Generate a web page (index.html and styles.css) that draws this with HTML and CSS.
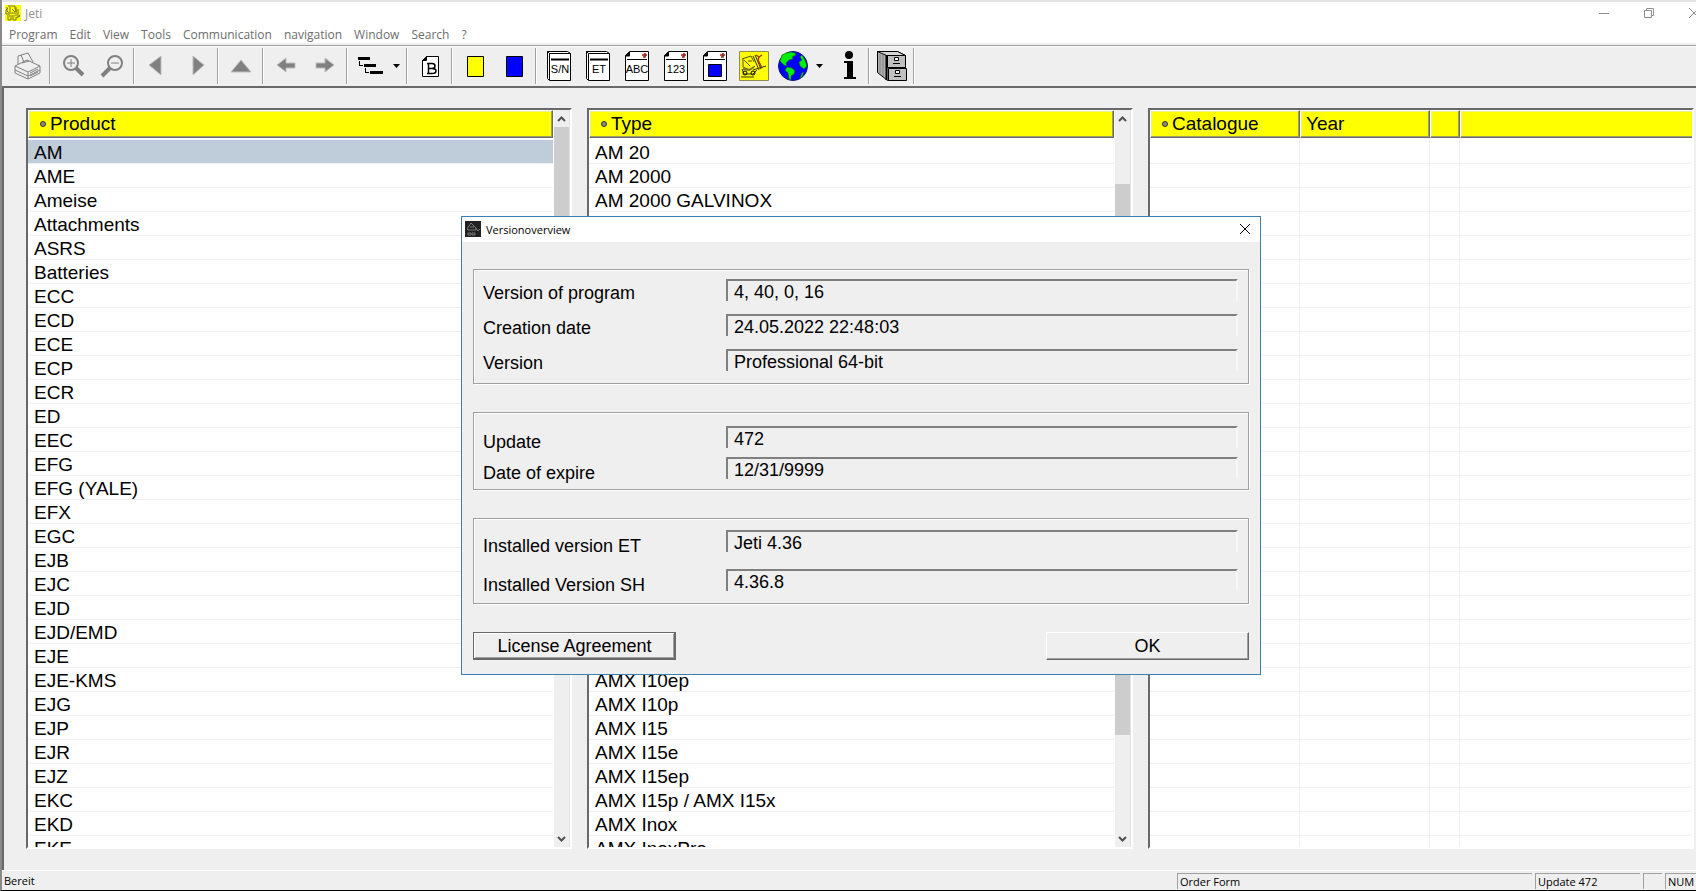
FILE: index.html
```
<!DOCTYPE html>
<html lang="en">
  <head>
    <meta charset="utf-8">
    <title>Jeti</title>
    <link rel="stylesheet" href="styles.css">
  </head>
  <body>
    <header class="titlebar">
      <svg class="app-icon" viewBox="0 0 16 16">
        <rect width="16" height="16" fill="#ff0"/>
        <path d="M3 1h7v3h1v3M2 2v4l2 2h6M3 3L1 5v4h4M5 2v5M7 4l3 3M11 2v9M13 4v8l2-2M2 11h8M3 12v3h3v-3M8 12v3h3v-3M11 13l4-2" fill="none" stroke="#77772e"/>
      </svg>
      <span class="title">Jeti</span>
      <div class="window-buttons">
        <button aria-label="Minimize"><svg viewBox="0 0 12 12"><path d="M1 6.500h10" /></svg></button>
        <button aria-label="Restore"><svg viewBox="0 0 12 12"><path d="M1.500 3.500h7v7h-7zM3.500 3V1.500h7v7H9" /></svg></button>
        <button aria-label="Close"><svg viewBox="0 0 12 12"><path d="M1 1l10 10M11 1L1 11" /></svg></button>
      </div>
    </header>

    <nav class="menu">
      <button>Program</button>
      <button>Edit</button>
      <button>View</button>
      <button>Tools</button>
      <button>Communication</button>
      <button>navigation</button>
      <button>Window</button>
      <button>Search</button>
      <button>?</button>
    </nav>

    <div class="toolbar">
      <button class="tool" aria-label="Print">
        <svg viewBox="0 0 30 30" fill="none" stroke="#808080">
          <path d="M2 15l12-6 13 6v7l-12 6-13-6zM2 15l13 6 12-6M15 21v7M5 13V5l10-3 5 9M8 4l3 7M2 19l13 6 12-6M17 22l8-4M17 25l8-4M9 12l7-2"/>
        </svg>
      </button>
      <span class="sep"></span>
      <button class="tool" aria-label="Zoom in">
        <svg viewBox="0 0 30 30" fill="none" stroke="#808080">
          <circle cx="13" cy="12" r="7" stroke-width="2"/>
          <path d="M9 12h8M13 8v8"/>
          <path d="M18 17l7 7" stroke-width="4"/>
        </svg>
      </button>
      <button class="tool" aria-label="Zoom out">
        <svg viewBox="0 0 30 30" fill="none" stroke="#808080">
          <circle cx="18" cy="12" r="7" stroke-width="2"/>
          <path d="M14 12h8"/>
          <path d="M13 17l-8 8" stroke-width="4"/>
        </svg>
      </button>
      <span class="sep"></span>
      <button class="tool" aria-label="Previous">
        <svg viewBox="0 0 30 30"><path d="M19 5v19L7 14z" fill="#808080" stroke="#bdbdbd"/></svg>
      </button>
      <button class="tool" aria-label="Next">
        <svg viewBox="0 0 30 30"><path d="M12 5v19l11-10z" fill="#808080" stroke="#bdbdbd"/></svg>
      </button>
      <span class="sep"></span>
      <button class="tool" aria-label="Up">
        <svg viewBox="0 0 30 30"><path d="M15 9l10 12H5z" fill="#808080" stroke="#bdbdbd"/></svg>
      </button>
      <span class="sep"></span>
      <button class="tool" aria-label="Back">
        <svg viewBox="0 0 30 30"><path d="M6 14l9-7v5h9v5h-9v4z" fill="#808080" stroke="#bdbdbd"/></svg>
      </button>
      <button class="tool" aria-label="Forward">
        <svg viewBox="0 0 30 30"><path d="M24 14l-9-7v5H6v5h9v4z" fill="#808080" stroke="#bdbdbd"/></svg>
      </button>
      <span class="sep"></span>
      <button class="tool" aria-label="Tree">
        <svg viewBox="0 0 30 30" shape-rendering="crispEdges">
          <path d="M3 6h12v3H3zM9 13h12v3H9zM15 20h13v3H15z"/>
          <path d="M4.500 10v4.500H8M10.500 17v4.500H14" fill="none" stroke="#000"/>
        </svg>
      </button>
      <button class="drop" aria-label="Tree menu"><svg viewBox="0 0 7 4"><path d="M0 0h7L3.500 4z"/></svg></button>
      <span class="sep"></span>
      <button class="tool" aria-label="Page B">
        <svg viewBox="0 0 30 30" fill="none" stroke="#000">
          <path d="M11.500 5.500h12v20h-16v-16z" fill="#fff"/>
          <path d="M7.500 9.500l4-4v4z" fill="#000"/>
          <path d="M13.500 12v10M12 12.500h5q3 0 3 2.500t-3 2.500h-3M17 17.500q4 0 4 2.500t-4 2.500h-5" stroke-width="1.500"/>
        </svg>
      </button>
      <span class="sep"></span>
      <button class="tool" aria-label="Yellow marker">
        <svg viewBox="0 0 30 30"><path d="M7.500 5.500h16v20h-16z" fill="#ff0" stroke="#000"/></svg>
      </button>
      <button class="tool" aria-label="Blue marker">
        <svg viewBox="0 0 30 30"><path d="M7.500 5.500h16v20h-16z" fill="#00f" stroke="#000"/></svg>
      </button>
      <span class="sep"></span>
      <button class="tool" aria-label="Serial number">
        <svg viewBox="0 0 30 30" fill="#fff" stroke="#000">
          <path d="M3.500.500h20l3 2v27h-21l-2-2zM5.500 29V2.500h21M3.500.500l2 2"/>
          <path d="M7 8.500h18" stroke-width="2"/>
          <text class="glyph" x="16" y="22">S/N</text>
        </svg>
      </button>
      <button class="tool" aria-label="ET">
        <svg viewBox="0 0 30 30" fill="#fff" stroke="#000">
          <path d="M3.500.500h20l3 2v27h-21l-2-2zM5.500 29V2.500h21M3.500.500l2 2"/>
          <path d="M7 8.500h18" stroke-width="2"/>
          <text class="glyph" x="16" y="22">ET</text>
        </svg>
      </button>
      <button class="tool" aria-label="Search by name">
        <svg viewBox="0 0 30 30" fill="#fff" stroke="#000">
          <path d="M7.500.500h19v29h-23v-25zM5 8.500h20"/>
          <path d="M3.500 5l4-4v4z" fill="#000"/>
          <path d="M21 6h2V2M20 4h5" stroke="#a01818" stroke-width="1.500"/>
          <text class="glyph" x="15" y="22">ABC</text>
        </svg>
      </button>
      <button class="tool" aria-label="Search by number">
        <svg viewBox="0 0 30 30" fill="#fff" stroke="#000">
          <path d="M7.500.500h19v29h-23v-25zM5 8.500h20"/>
          <path d="M3.500 5l4-4v4z" fill="#000"/>
          <path d="M21 6h2V2M20 4h5" stroke="#a01818" stroke-width="1.500"/>
          <text class="glyph" x="15" y="22">123</text>
        </svg>
      </button>
      <button class="tool" aria-label="Search by picture">
        <svg viewBox="0 0 30 30" fill="#fff" stroke="#000">
          <path d="M7.500.500h19v29h-23v-25zM5 8.500h20"/>
          <path d="M3.500 5l4-4v4z" fill="#000"/>
          <path d="M21 6h2V2M20 4h5" stroke="#a01818" stroke-width="1.500"/>
          <path d="M8.500 13.500h13v12h-13z" fill="#00f"/>
        </svg>
      </button>
      <button class="tool" aria-label="Truck parts">
        <svg viewBox="0 0 30 30" fill="none" stroke="#000">
          <path d="M.500.500h29v29H.500z" fill="#ff0" stroke="#8d8d50"/>
          <path d="M3 8l9-3 3 6M4 8v8l7 3 5-4M5 9l6 6M9 10h4" stroke="#55551a"/>
          <path d="M14 5l6 14M16 4l6 14M14 19l13-4M3 18l2 5h9l4-4M2 26h13" stroke="#33330a"/>
          <circle cx="6" cy="22" r="2"/><circle cx="14" cy="22" r="2"/>
          <path d="M17 4l3 2-1 3 4 8M20 6l3-2" stroke="#a83a1a" stroke-width="1.500"/>
          <path d="M4 18l6 1 5-3" stroke="#77772e" stroke-width="2"/>
        </svg>
      </button>
      <button class="tool" aria-label="Language">
        <svg viewBox="0 0 30 30">
          <circle cx="15" cy="15" r="14.500" fill="#00f" stroke="#117"/>
          <path d="M8 2l5-1 4 1 1 2-4 2 1 2-4 1-3 3 1 3-3-1-4-4 2-6zM9 16l5 1 3 3-1 3-3 2v4l-2-1-1-6-3-3zM24 4l3 5 2 6-3 3-4-3-1-4 3-2-2-3zM24 22l2-1-2 5-2 1z" fill="#0e0" stroke="#0a5a2a" stroke-width=".600"/>
        </svg>
      </button>
      <button class="drop" aria-label="Language menu"><svg viewBox="0 0 7 4"><path d="M0 0h7L3.500 4z"/></svg></button>
      <button class="tool" aria-label="Info">
        <svg viewBox="0 0 30 30"><circle cx="17" cy="4" r="4"/><path d="M12 10h9v16h3v2H12v-2h3V12h-3z"/></svg>
      </button>
      <span class="sep"></span>
      <button class="tool" aria-label="Order form">
        <svg viewBox="0 0 30 30" stroke="#000">
          <path d="M.500.500h20l8 4v25h-18l-10-8z" fill="#b0b0b0"/>
          <path d="M.500.500h20l8 4h-19z" fill="#d5d5d5"/>
          <path d="M3 3v19M6 4v21" stroke="#808080"/>
          <path d="M10.500 4.500h18v12h-18zM11.500 17.500h18v12h-18z" fill="#c0c0c0"/>
          <path d="M17.500 6.500h4v3h-4zM16 12.500h7M18.500 19.500h4v3h-4zM17 25.500h7" fill="#fff"/>
          <path d="M9.500 4v25" stroke-width="2"/>
        </svg>
      </button>
      <span class="sep"></span>
    </div>

    <main class="panels">
      <section class="panel">
        <div class="list">
          <table>
            <thead><tr><th><span class="sort"></span>Product</th></tr></thead>
            <tbody>
              <tr class="selected"><td>AM</td></tr>
              <tr><td>AME</td></tr>
              <tr><td>Ameise</td></tr>
              <tr><td>Attachments</td></tr>
              <tr><td>ASRS</td></tr>
              <tr><td>Batteries</td></tr>
              <tr><td>ECC</td></tr>
              <tr><td>ECD</td></tr>
              <tr><td>ECE</td></tr>
              <tr><td>ECP</td></tr>
              <tr><td>ECR</td></tr>
              <tr><td>ED</td></tr>
              <tr><td>EEC</td></tr>
              <tr><td>EFG</td></tr>
              <tr><td>EFG (YALE)</td></tr>
              <tr><td>EFX</td></tr>
              <tr><td>EGC</td></tr>
              <tr><td>EJB</td></tr>
              <tr><td>EJC</td></tr>
              <tr><td>EJD</td></tr>
              <tr><td>EJD/EMD</td></tr>
              <tr><td>EJE</td></tr>
              <tr><td>EJE-KMS</td></tr>
              <tr><td>EJG</td></tr>
              <tr><td>EJP</td></tr>
              <tr><td>EJR</td></tr>
              <tr><td>EJZ</td></tr>
              <tr><td>EKC</td></tr>
              <tr><td>EKD</td></tr>
              <tr><td>EKE</td></tr>
            </tbody>
          </table>
        </div>
        <div class="scrollbar">
          <button aria-label="Scroll up"><svg viewBox="0 0 9 6"><path d="M1 5l3.500-3.500L8 5"/></svg></button>
          <div class="track"><div class="thumb thumb-product"></div></div>
          <button aria-label="Scroll down"><svg viewBox="0 0 9 6"><path d="M1 1l3.500 3.500L8 1"/></svg></button>
        </div>
      </section>

      <section class="panel">
        <div class="list">
          <table>
            <thead><tr><th><span class="sort"></span>Type</th></tr></thead>
            <tbody>
              <tr><td>AM 20</td></tr>
              <tr><td>AM 2000</td></tr>
              <tr><td>AM 2000 GALVINOX</td></tr>
              <tr><td></td></tr>
              <tr><td></td></tr>
              <tr><td></td></tr>
              <tr><td></td></tr>
              <tr><td></td></tr>
              <tr><td></td></tr>
              <tr><td></td></tr>
              <tr><td></td></tr>
              <tr><td></td></tr>
              <tr><td></td></tr>
              <tr><td></td></tr>
              <tr><td></td></tr>
              <tr><td></td></tr>
              <tr><td></td></tr>
              <tr><td></td></tr>
              <tr><td></td></tr>
              <tr><td></td></tr>
              <tr><td></td></tr>
              <tr><td></td></tr>
              <tr><td>AMX I10ep</td></tr>
              <tr><td>AMX I10p</td></tr>
              <tr><td>AMX I15</td></tr>
              <tr><td>AMX I15e</td></tr>
              <tr><td>AMX I15ep</td></tr>
              <tr><td>AMX I15p / AMX I15x</td></tr>
              <tr><td>AMX Inox</td></tr>
              <tr><td>AMX InoxPro</td></tr>
            </tbody>
          </table>
        </div>
        <div class="scrollbar">
          <button aria-label="Scroll up"><svg viewBox="0 0 9 6"><path d="M1 5l3.500-3.500L8 5"/></svg></button>
          <div class="track"><div class="thumb thumb-type"></div></div>
          <button aria-label="Scroll down"><svg viewBox="0 0 9 6"><path d="M1 1l3.500 3.500L8 1"/></svg></button>
        </div>
      </section>

      <section class="panel">
        <div class="list">
          <table class="catalogue">
            <thead>
              <tr>
                <th class="col-catalogue"><span class="sort"></span>Catalogue</th>
                <th class="col-year">Year</th>
                <th class="col-flag"></th>
                <th class="col-rest"></th>
              </tr>
            </thead>
            <tbody>
              <tr><td></td><td></td><td></td><td></td></tr>
            </tbody>
          </table>
        </div>
      </section>
    </main>

    <footer class="statusbar">
      <span class="message">Bereit</span>
      <span class="pane pane-order">Order Form</span>
      <span class="pane pane-update">Update 472</span>
      <span class="pane pane-caps"></span>
      <span class="pane pane-num">NUM</span>
    </footer>

    <div class="dialog" role="dialog" aria-labelledby="dialog_title">
      <div class="dialog-title">
        <svg class="app-icon" viewBox="0 0 16 16">
          <rect width="16" height="16" fill="#222"/>
          <path d="M2 8l4-6 5 5v2H3zM5 6h4M11 7l2 3 2-2M3 12h3v2H3zM7 12h3v2H7z" fill="none" stroke="#777"/>
        </svg>
        <span id="dialog_title">Versionoverview</span>
        <button aria-label="Close"><svg viewBox="0 0 12 12"><path d="M1 1l10 10M11 1L1 11"/></svg></button>
      </div>
      <form class="dialog-body">
        <fieldset class="group group-program">
          <div class="row"><label for="program">Version of program</label><input id="program" value="4, 40, 0, 16" readonly></div>
          <div class="row"><label for="created">Creation date</label><input id="created" value="24.05.2022 22:48:03" readonly></div>
          <div class="row"><label for="version">Version</label><input id="version" value="Professional 64-bit" readonly></div>
        </fieldset>
        <fieldset class="group group-update">
          <div class="row"><label for="update">Update</label><input id="update" value="472" readonly></div>
          <div class="row"><label for="expire">Date of expire</label><input id="expire" value="12/31/9999" readonly></div>
        </fieldset>
        <fieldset class="group group-installed">
          <div class="row"><label for="et">Installed version ET</label><input id="et" value="Jeti 4.36" readonly></div>
          <div class="row"><label for="sh">Installed Version SH</label><input id="sh" value="4.36.8" readonly></div>
        </fieldset>
        <div class="buttons">
          <button type="button" class="default">License Agreement</button>
          <button type="button">OK</button>
        </div>
      </form>
    </div>
  </body>
</html>
```

FILE: styles.css
```
* {
  box-sizing: border-box;
}
body {
  margin: 0;
  height: 100vh;
  display: flex;
  flex-direction: column;
  overflow: hidden;
  position: relative;
  background: #efefef;
  border-left: 2px solid #8a8a8a;
  border-bottom: 1px solid #000;
  font-family: "Open Sans", "Noto Sans", sans-serif;
  font-size: 12px;
  color: #000;
}
button {
  margin: 0;
  padding: 0;
  border: 0;
  background: none;
  font: inherit;
  color: inherit;
}
svg {
  display: block;
}

/* title and menu */
.titlebar {
  display: flex;
  align-items: center;
  height: 24px;
  padding-left: 3px;
  border-top: 2px solid #e5e5e5;
  background: #fff;
  color: #8f8f8f;
}
.app-icon {
  width: 16px;
  height: 16px;
}
.title {
  padding-left: 4px;
}
.window-buttons {
  display: flex;
  margin-left: auto;
  margin-right: -20px;
}
.window-buttons button {
  width: 45px;
  display: flex;
  justify-content: center;
}
.window-buttons svg {
  width: 12px;
  height: 12px;
  fill: none;
  stroke: #909090;
}
.menu {
  display: flex;
  gap: 12px;
  height: 21px;
  padding: 2px 7px 0;
  background: #fff;
  border-bottom: 2px solid #efefef;
  color: #6d6d6d;
}

/* toolbar */
.toolbar {
  display: flex;
  align-items: center;
  height: 43px;
  padding-left: 6px;
  border-top: 1px solid #a0a0a0;
  border-bottom: 2px solid #696969;
  box-shadow: inset 0 1px #fff;
}
.tool {
  width: 39px;
  display: flex;
  justify-content: center;
}
.tool svg {
  width: 30px;
  height: 30px;
}
.drop {
  width: 15px;
  display: flex;
  justify-content: center;
}
.drop svg {
  width: 7px;
  height: 4px;
}
.sep {
  width: 2px;
  height: 36px;
  margin: 0 2px;
  border-left: 1px solid #a0a0a0;
  border-right: 1px solid #fff;
}
.glyph {
  font-family: "Liberation Sans", sans-serif;
  font-size: 11px;
  text-anchor: middle;
  fill: #000;
  stroke: none;
}

/* lists */
.panels {
  flex: 1;
  min-height: 0;
  display: grid;
  grid-template-columns: repeat(3, 1fr);
  gap: 15px;
  padding: 20px 2px 21px 22px;
  border-left: 2px solid #696969;
}
.panel {
  min-height: 0;
  display: flex;
  border: 2px solid;
  border-color: #696969 #fff #fff #696969;
  background: #fff;
}
.list {
  flex: 1;
  min-width: 0;
  overflow: hidden;
}
table {
  width: 100%;
  border-collapse: separate;
  border-spacing: 0;
  table-layout: fixed;
  font-family: "Liberation Sans", Arial, sans-serif;
  font-size: 19px;
}
th {
  height: 28px;
  padding: 0 5px;
  background: #ff0;
  border: 1px solid;
  border-color: #fff #696969 #696969 #fff;
  box-shadow: inset -1px -1px #a0a060, inset 1px 1px #efef90;
  font-weight: normal;
  text-align: left;
  line-height: 26px;
}
tbody::before {
  content: "";
  display: block;
  height: 2px;
}
td {
  height: 24px;
  padding: 2px 6px 0;
  border-bottom: 1px solid #efefef;
  line-height: 21px;
}
.selected td {
  background: #bfccda;
}
.sort {
  display: inline-block;
  width: 6px;
  height: 6px;
  margin: 0 4px 3px 6px;
  border: 1px solid #333;
  border-radius: 3px;
  background: #888;
}
.catalogue {
  height: 100%;
}
.catalogue tbody::before {
  display: none;
}
.catalogue td {
  border-right: 1px solid #efefef;
  border-bottom: 0;
  background: repeating-linear-gradient(#fff 0 23px, #efefef 23px 24px) 0 2px;
}
.catalogue td:last-child {
  border-right: 0;
}
.col-catalogue {
  width: 150px;
}
.col-year {
  width: 130px;
}
.col-flag {
  width: 30px;
}
.col-rest {
  border-right: 0;
  box-shadow: inset 0 -1px #a0a060, inset 1px 1px #efef90;
}

.scrollbar {
  width: 17px;
  display: flex;
  flex-direction: column;
  background: #efefef;
  border-left: 1px solid #fff;
  border-right: 1px solid #e3e3e3;
}
.scrollbar button {
  height: 17px;
  display: flex;
  align-items: center;
  justify-content: center;
}
.scrollbar svg {
  width: 9px;
  height: 6px;
  fill: none;
  stroke: #505050;
  stroke-width: 2;
}
.track {
  flex: 1;
}
.thumb {
  background: #cdcdcd;
}
.thumb-product {
  height: 60%;
}
.thumb-type {
  height: 551px;
  margin-top: 57px;
}

/* status bar */
.statusbar {
  display: flex;
  gap: 3px;
  height: 20px;
  padding: 2px 0 1px 2px;
  border-top: 1px solid #fff;
  font-size: 11px;
  line-height: 16px;
}
.message {
  flex: 1;
}
.pane {
  padding-left: 2px;
  border-left: 1px solid #a0a0a0;
  border-top: 1px solid #a0a0a0;
}
.pane-order {
  width: 355px;
}
.pane-update {
  width: 105px;
}
.pane-caps {
  width: 19px;
}
.pane-num {
  width: 31px;
}

/* version dialog */
.dialog {
  position: absolute;
  top: 216px;
  left: 459px;
  width: 800px;
  background: #efefef;
  border: 1px solid #3c7fb1;
}
.dialog-title {
  display: flex;
  align-items: center;
  gap: 5px;
  height: 25px;
  padding: 0 9px 1px 3px;
  background: #fff;
  font-size: 11px;
}
.dialog-title button {
  margin-left: auto;
}
.dialog-title button svg {
  width: 12px;
  height: 12px;
  stroke: #000;
}
.dialog-body {
  margin: 0;
  padding: 27px 11px 14px;
  font-family: "Liberation Sans", Arial, sans-serif;
  font-size: 18px;
}
.group {
  display: flex;
  flex-direction: column;
  margin: 0 0 28px;
  padding: 9px 10px 12px 9px;
  border: 1px solid #a0a0a0;
  box-shadow: 1px 1px #fff, inset 1px 1px #fff;
}
.group-program {
  gap: 13px;
}
.group-update {
  gap: 9px;
  padding-top: 13px;
  padding-bottom: 10px;
}
.group-installed {
  gap: 17px;
  padding-top: 11px;
}
.row {
  display: flex;
  height: 22px;
}
.row label {
  width: 243px;
  padding-top: 5px;
  line-height: 22px;
}
.group-program label {
  padding-top: 3px;
}
.row input {
  flex: 1;
  min-width: 0;
  margin: 0;
  padding: 1px 6px 0;
  border: 2px solid;
  border-color: #808080 #f7f7f7 #efefef #808080;
  border-bottom-width: 0;
  background: #efefef;
  font: inherit;
  line-height: 20px;
  outline: 0;
}
.buttons {
  display: flex;
  justify-content: space-between;
}
.buttons button {
  width: 203px;
  height: 28px;
  border: 1px solid;
  border-color: #fff #696969 #696969 #fff;
  box-shadow: inset -1px -1px #a0a0a0;
}
.buttons .default {
  border-color: #696969;
  box-shadow: inset -1px -1px #696969, inset 1px 1px #fff, inset -2px -2px #a0a0a0;
}
```
